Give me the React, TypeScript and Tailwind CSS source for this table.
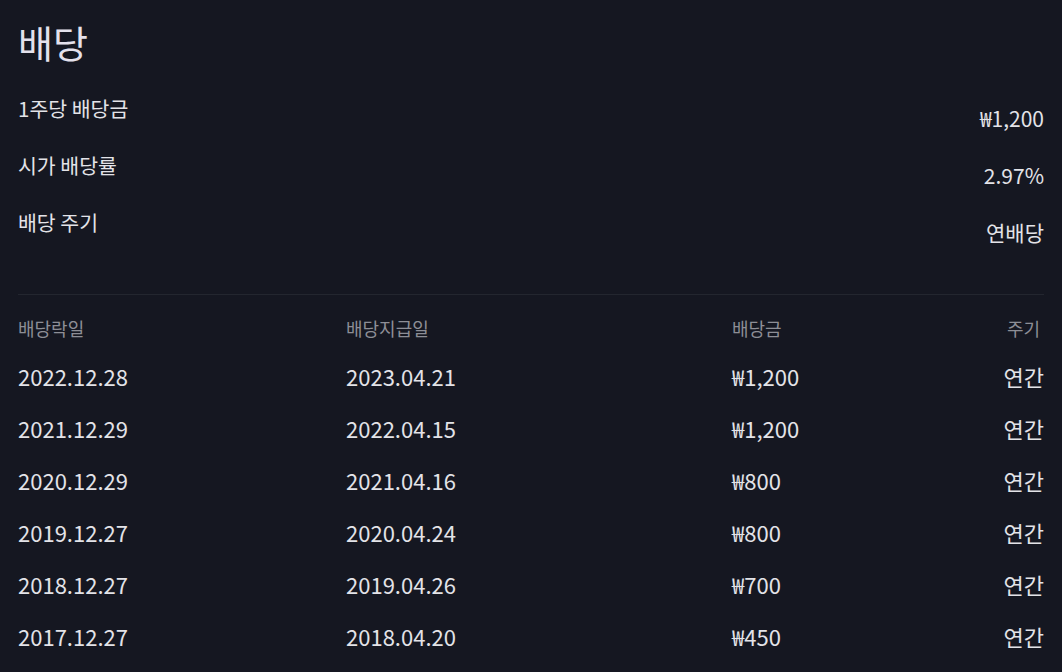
import React from 'react';

const info = [
  { label: '1주당 배당금', value: '₩1,200' },
  { label: '시가 배당률', value: '2.97%' },
  { label: '배당 주기', value: '연배당' },
];

const rows = [
  ['2022.12.28', '2023.04.21', '₩1,200', '연간'],
  ['2021.12.29', '2022.04.15', '₩1,200', '연간'],
  ['2020.12.29', '2021.04.16', '₩800', '연간'],
  ['2019.12.27', '2020.04.24', '₩800', '연간'],
  ['2018.12.27', '2019.04.26', '₩700', '연간'],
  ['2017.12.27', '2018.04.20', '₩450', '연간'],
];

export default function App() {
  return (
    <div
      className="w-[1062px] h-[672px] overflow-hidden bg-[#151721] text-[#e3e3e8] px-[18px] pt-[20px]"
      style={{ fontFamily: '"Noto Sans CJK KR", "Noto Sans", sans-serif' }}
    >
      <h1 className="h-[44px] text-[38px] leading-[44px] font-normal text-[#e4e1ec]">배당</h1>

      <div className="mt-[32px]">
        {info.map((item) => (
          <div key={item.label} className="h-[57px] flex justify-between items-start">
            <span className="text-[20.5px] leading-[24px]">{item.label}</span>
            <span className="text-[21px] leading-[24px] mt-[10px]">{item.value}</span>
          </div>
        ))}
      </div>

      <div className="mt-[27px] border-t border-[#23262f]" />

      <div className="grid grid-cols-[328px_386px_1fr_auto] h-[34px] mt-[16px] items-center text-[18px] text-[#8d8e96]">
        <span>배당락일</span>
        <span>배당지급일</span>
        <span>배당금</span>
        <span className="pr-[4px]">주기</span>
      </div>

      <div className="mt-[5px]">
        {rows.map((r) => (
          <div key={r[0]} className="grid grid-cols-[328px_386px_1fr_auto] h-[52px] items-center text-[22px]">
            <span>{r[0]}</span>
            <span>{r[1]}</span>
            <span>{r[2]}</span>
            <span>{r[3]}</span>
          </div>
        ))}
      </div>
    </div>
  );
}
